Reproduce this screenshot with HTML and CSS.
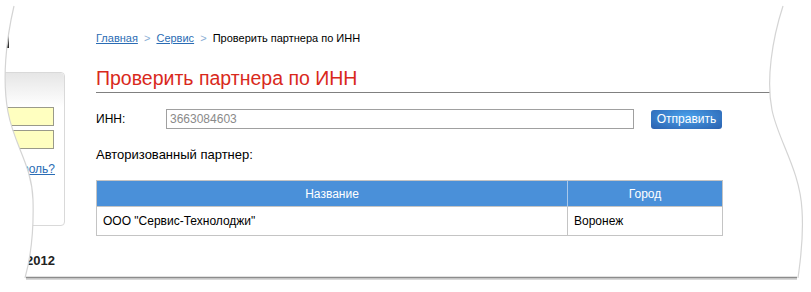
FILE: index.html
```html
<!DOCTYPE html>
<html lang="ru">
<head>
  <meta charset="UTF-8">
  <meta name="viewport" content="width=device-width, initial-scale=1.0">
  <title>Проверить партнера по ИНН</title>
  <link rel="stylesheet" href="styles.css">
</head>
<body>
  <div class="page">
    <!-- Left column: login box and copyright -->
    <div class="sidebar">
      <div class="logo-mark"></div>
      <div class="login-box">
        <div class="login-head"></div>
        <input type="text" class="login-input">
        <input type="password" class="login-input">
        <a href="#" class="forgot">Забыли пароль?</a>
      </div>
      <div class="copyright">© 2005-2012</div>
    </div>

    <!-- Main content -->
    <div class="main">
      <div class="breadcrumbs">
        <a href="#">Главная</a>
        <span class="sep">&gt;</span>
        <a href="#">Сервис</a>
        <span class="sep">&gt;</span>
        <span>Проверить партнера по ИНН</span>
      </div>

      <h1 class="title">Проверить партнера по ИНН</h1>

      <form class="inn-form" onsubmit="return false">
        <label for="inn" class="inn-label">ИНН:</label>
        <input type="text" id="inn" class="inn-input" value="3663084603">
        <button type="submit" class="send-button">Отправить</button>
      </form>

      <p class="result-caption">Авторизованный партнер:</p>

      <table class="partners">
        <tr>
          <th class="col-name">Название</th>
          <th>Город</th>
        </tr>
        <tr>
          <td>ООО "Сервис-Технолоджи"</td>
          <td>Воронеж</td>
        </tr>
      </table>
    </div>
  </div>

  <!-- Torn paper edge over the page -->
  <svg class="torn-edge" width="811" height="292" viewBox="0 0 811 292">
    <path fill="#fff" fill-rule="evenodd"
      d="M0,0 H811 V292 H0 Z
         M14,6 L783,6
         C772,40 766,80 772,110 C778,140 800,170 802,210 C804,240 800,262 798,278
         L25,278
         C30,260 34,235 33,200 C32,165 14,145 8,112 C2,80 6,40 14,6 Z"></path>
    <path fill="none" stroke="#d4d4d4" stroke-width="1.2"
      d="M14,6 C6,40 2,80 8,112 C14,145 32,165 33,200 C34,235 30,260 25,278"></path>
    <path fill="none" stroke="#d4d4d4" stroke-width="1.2"
      d="M783,6 C772,40 766,80 772,110 C778,140 800,170 802,210 C804,240 800,262 798,278"></path>
    <line x1="26" y1="279" x2="797" y2="279" stroke="#d8d8d8" stroke-width="2"></line>
    <line x1="26" y1="277.5" x2="797" y2="277.5" stroke="#8c8c8c" stroke-width="1.5"></line>
  </svg>
</body>
</html>
```

FILE: styles.css
```css
body {
  margin: 0;
  width: 811px;
  height: 292px;
  overflow: hidden;
  background: #fff;
  font-family: "Liberation Sans", Arial, sans-serif;
  font-size: 12px;
  color: #000;
}

a {
  color: #2a6cb4;
}

.page {
  display: flex;
  margin-left: -135px;
}

/* Sidebar */

.sidebar {
  width: 200px;
  flex-shrink: 0;
}

.logo-mark {
  width: 3px;
  height: 15px;
  margin: 33px 0 0 141px;
  background: linear-gradient(#888, #222);
}

.login-box {
  display: flex;
  flex-direction: column;
  align-items: flex-end;
  height: 152px;
  margin-top: 24px;
  border: 1px solid #d9d9d9;
  border-radius: 0 4px 4px 0;
  background: #fff;
}

.login-head {
  align-self: stretch;
  height: 34px;
  border-radius: 0 4px 0 0;
  background: linear-gradient(#e6e6e6, #fff);
}

.login-input {
  width: 150px;
  height: 19px;
  box-sizing: border-box;
  margin: 0 10px 4px 0;
  border: 1px solid #9a9a8a;
  background: #ffffc0;
}

.forgot {
  margin: 9px 9px 0 0;
  font-size: 12px;
  line-height: 14px;
}

.copyright {
  margin-top: 27px;
  padding-right: 10px;
  text-align: right;
  font-size: 13px;
  font-weight: bold;
  color: #222;
}

/* Main */

.main {
  width: 700px;
  margin-left: 31px;
  padding-top: 31px;
}

.breadcrumbs {
  font-size: 11px;
  line-height: 14px;
  color: #000;
}

.breadcrumbs .sep {
  margin: 0 3px;
  color: #8aaed4;
}

.title {
  margin: 21px 0 0;
  padding-bottom: 2px;
  border-bottom: 1px solid #808080;
  font-size: 19.5px;
  font-weight: normal;
  line-height: 24px;
  color: #d9291c;
}

.inn-form {
  display: flex;
  align-items: center;
  margin: 16px 0 0;
}

.inn-label {
  width: 70px;
}

.inn-input {
  width: 468px;
  height: 20px;
  box-sizing: border-box;
  padding: 0 3px;
  border: 1px solid #a0a0a0;
  font-family: "Liberation Sans", Arial, sans-serif;
  font-size: 12px;
  color: #8a8a8a;
}

.send-button {
  width: 71px;
  height: 19px;
  margin-left: 17px;
  padding: 0;
  border: none;
  border-radius: 3px;
  background: radial-gradient(ellipse at 50% 35%, #4aa2ec, #2a60ae);
  font-family: "Liberation Sans", Arial, sans-serif;
  font-size: 12px;
  color: #fff;
}

.result-caption {
  margin: 19px 0 0;
  font-size: 13px;
  line-height: 14px;
}

.partners {
  width: 627px;
  margin-top: 18px;
  border-collapse: collapse;
  border: 1px solid #c4c4c4;
}

.partners th {
  height: 25px;
  padding: 0;
  background: #4a90d9;
  font-weight: normal;
  color: #fff;
  text-align: center;
}

.partners th + th {
  border-left: 1px solid #a9c8ea;
}

.partners .col-name {
  width: 470px;
}

.partners td {
  height: 28px;
  padding: 0 6px;
  border: 1px solid #c4c4c4;
}

/* Overlay */

.torn-edge {
  position: absolute;
  top: 0;
  left: 0;
  pointer-events: none;
}
```
